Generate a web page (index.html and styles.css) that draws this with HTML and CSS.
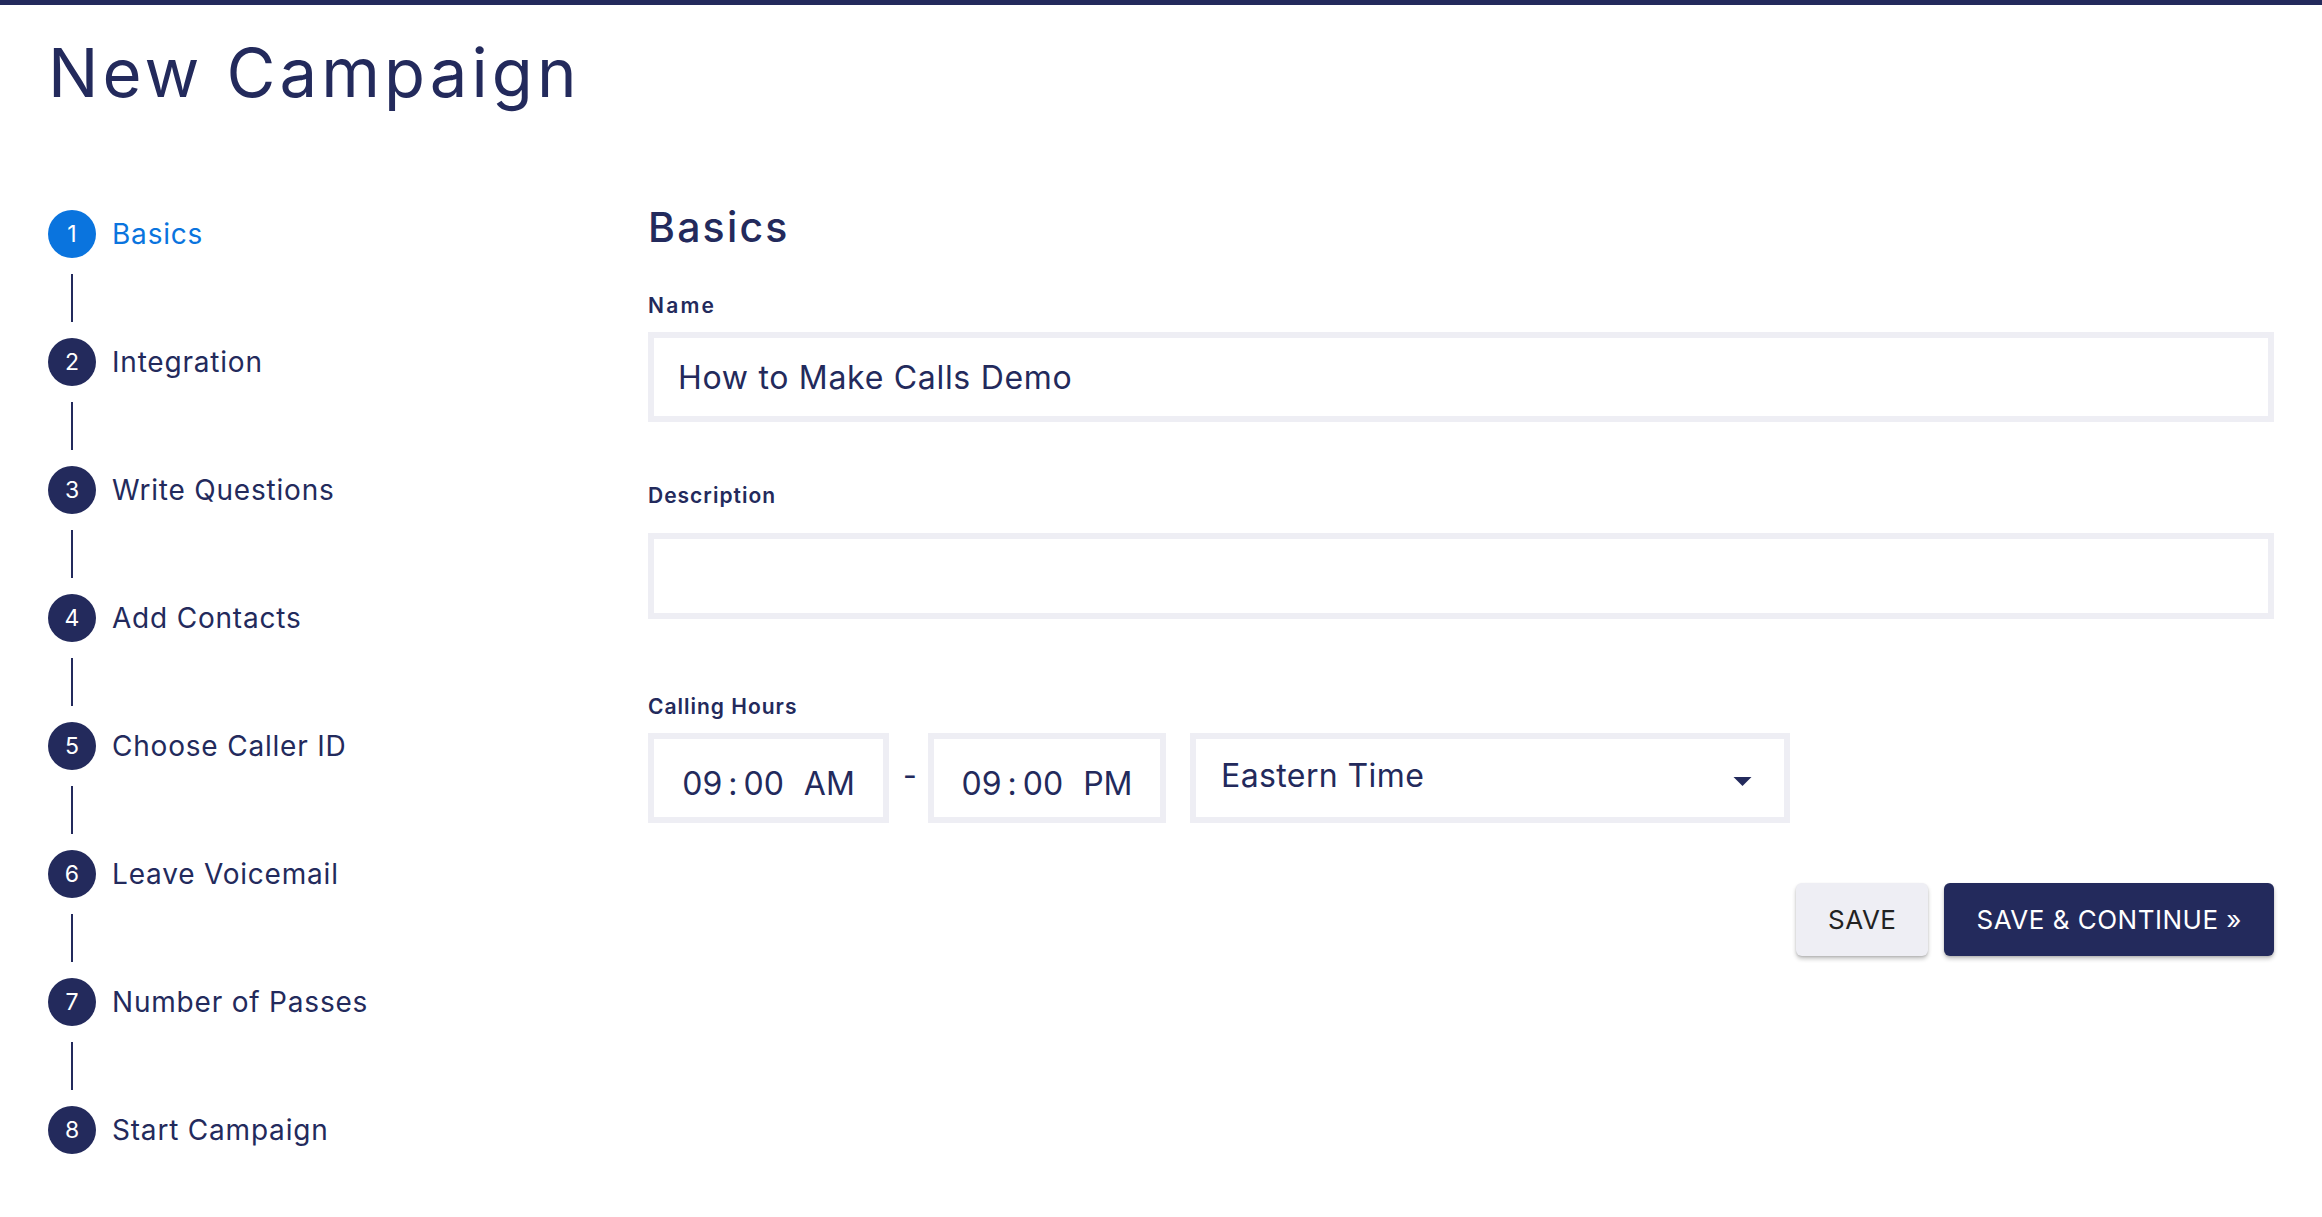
FILE: index.html
```html
<!DOCTYPE html>
<html lang="en">
<head>
<meta charset="utf-8">
<title>New Campaign</title>
<link rel="stylesheet" href="styles.css">
</head>
<body>
<div class="topbar"></div>
<div class="page">
  <h1 class="title">New Campaign</h1>
  <div class="layout">
    <nav class="steps">
      <div class="step active"><span class="num">1</span><span class="step-label">Basics</span></div>
      <div class="connector"></div>
      <div class="step"><span class="num">2</span><span class="step-label">Integration</span></div>
      <div class="connector"></div>
      <div class="step"><span class="num">3</span><span class="step-label">Write Questions</span></div>
      <div class="connector"></div>
      <div class="step"><span class="num">4</span><span class="step-label">Add Contacts</span></div>
      <div class="connector"></div>
      <div class="step"><span class="num">5</span><span class="step-label">Choose Caller ID</span></div>
      <div class="connector"></div>
      <div class="step"><span class="num">6</span><span class="step-label">Leave Voicemail</span></div>
      <div class="connector"></div>
      <div class="step"><span class="num">7</span><span class="step-label">Number of Passes</span></div>
      <div class="connector"></div>
      <div class="step"><span class="num">8</span><span class="step-label">Start Campaign</span></div>
    </nav>
    <main class="form">
      <h2 class="section-title">Basics</h2>
      <div class="field-label name-label">Name</div>
      <div class="input name-input">How to Make Calls Demo</div>
      <div class="field-label desc-label">Description</div>
      <div class="input desc-input"></div>
      <div class="field-label hours-label">Calling Hours</div>
      <div class="hours-row">
        <div class="time time-start"><span>09</span><span class="colon">:</span><span>00</span><span class="ampm">AM</span></div>
        <span class="dash">-</span>
        <div class="time time-end"><span>09</span><span class="colon">:</span><span>00</span><span class="ampm">PM</span></div>
        <div class="select">
          <span>Eastern Time</span>
          <svg class="caret" width="20" height="10" viewBox="0 0 20 10"><path d="M0 0 L20 0 L10 10 Z" fill="#232a5c"/></svg>
        </div>
      </div>
      <div class="actions">
        <button class="btn btn-save">SAVE</button>
        <button class="btn btn-primary">SAVE &amp; CONTINUE »</button>
      </div>
    </main>
  </div>
</div>
</body>
</html>
```

FILE: styles.css
```css
html, body {
  margin: 0;
  padding: 0;
  background: #ffffff;
}
body {
  font-family: "Inter", "Noto Sans", sans-serif;
  color: #232a5c;
}
.topbar {
  height: 5px;
  background: #232a5c;
}
.page {
  padding: 0 48px;
}
.title {
  margin: 28px 0 0 0;
  font-size: 67px;
  line-height: 80px;
  font-weight: 400;
  letter-spacing: 4.1px;
}
.layout {
  display: flex;
  margin-top: 97px;
}
.steps {
  width: 600px;
  flex: none;
  display: flex;
  flex-direction: column;
}
.step {
  display: flex;
  align-items: center;
  height: 48px;
  gap: 16px;
}
.num {
  width: 48px;
  height: 48px;
  border-radius: 50%;
  background: #232a5c;
  color: #ffffff;
  display: flex;
  align-items: center;
  justify-content: center;
  font-size: 23px;
  font-weight: 400;
}
.step-label {
  font-size: 28px;
  line-height: 48px;
  letter-spacing: 0.8px;
}
.step.active .num {
  background: #0a74de;
}
.step.active .step-label {
  color: #0a74de;
}
.connector {
  width: 2px;
  height: 48px;
  margin: 16px 0 16px 23px;
  background: #232a5c;
}
.form {
  flex: 1;
  display: flex;
  flex-direction: column;
}
.section-title {
  margin: 1px 0 0 0;
  font-size: 41px;
  line-height: 32px;
  font-weight: 500;
  letter-spacing: 2.2px;
}
.field-label {
  font-size: 21px;
  line-height: 24px;
  font-weight: 600;
  letter-spacing: 1px;
  margin-bottom: 14px;
}
.name-label {
  margin-top: 51px;
  letter-spacing: 2.2px;
}
.desc-label {
  margin-top: 62px;
  margin-bottom: 25px;
}
.hours-label {
  margin-top: 76px;
}
.input {
  box-sizing: border-box;
  border: 6px solid #eeeef4;
  display: flex;
  align-items: center;
  padding: 0 24px;
  font-size: 32px;
  letter-spacing: 0.7px;
}
.name-input {
  height: 90px;
}
.desc-input {
  height: 86px;
}
.hours-row {
  display: flex;
  align-items: center;
  height: 90px;
}
.time {
  box-sizing: border-box;
  height: 90px;
  border: 6px solid #eeeef4;
  display: flex;
  align-items: center;
  justify-content: center;
  padding-top: 10px;
  font-size: 32px;
}
.time-start {
  width: 241px;
}
.time-end {
  width: 238px;
}
.colon {
  margin: 0 6px;
}
.ampm {
  margin-left: 20px;
}
.dash {
  width: 11px;
  margin: 0 14px;
  font-size: 30px;
  text-align: center;
  padding-bottom: 6px;
}
.select {
  box-sizing: border-box;
  width: 600px;
  height: 90px;
  margin-left: 24px;
  border: 6px solid #eeeef4;
  display: flex;
  align-items: center;
  justify-content: space-between;
  padding: 0 32px 6px 25px;
  font-size: 32px;
  letter-spacing: 0.4px;
}
.caret {
  display: block;
  width: 19px;
  height: 9px;
  margin-top: 12px;
}
.actions {
  display: flex;
  justify-content: flex-end;
  gap: 16px;
  margin-top: 60px;
}
.btn {
  height: 73px;
  border: none;
  border-radius: 6px;
  padding: 0 32px;
  font-family: "Inter", "Noto Sans", sans-serif;
  font-size: 26px;
  font-weight: 400;
  letter-spacing: 0.5px;
  box-shadow: 0 3px 4px rgba(0, 0, 0, 0.22), 0 1px 2px rgba(0, 0, 0, 0.12);
  cursor: pointer;
}
.btn-save {
  background: #eeeef4;
  color: #222222;
}
.btn-primary {
  background: #232a5c;
  color: #ffffff;
}
```
